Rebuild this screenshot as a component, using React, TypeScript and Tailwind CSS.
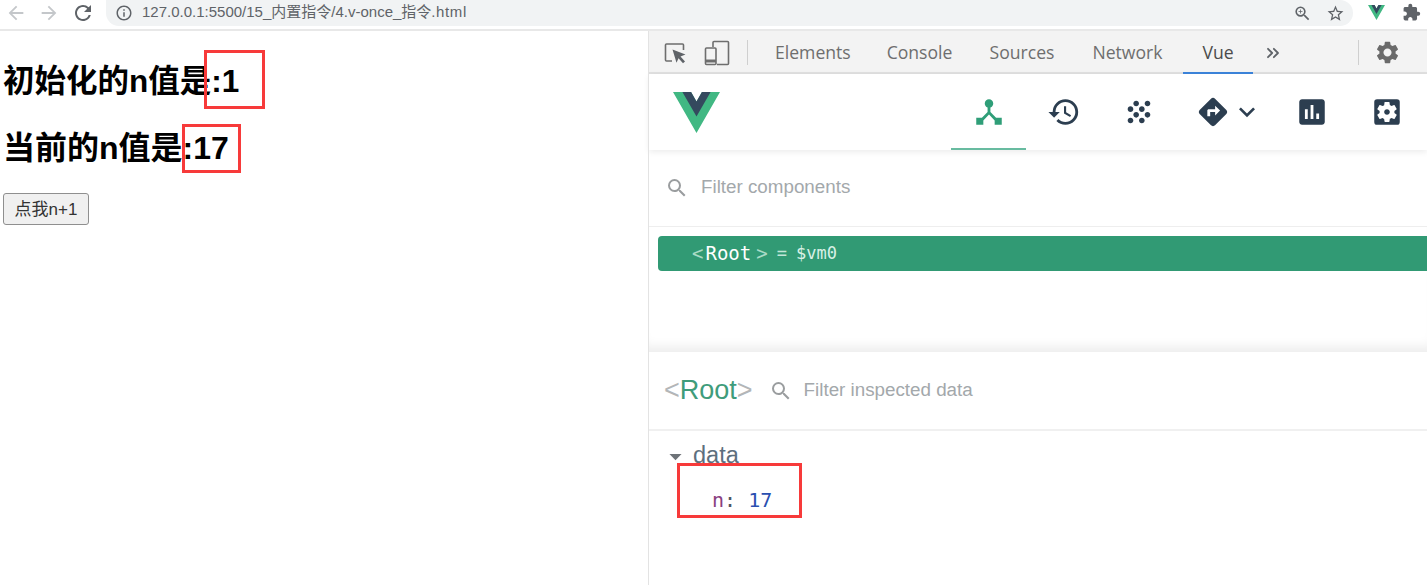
import {
  MdArrowBack,
  MdArrowForward,
  MdRefresh,
  MdInfoOutline,
  MdZoomIn,
  MdStarBorder,
  MdExtension,
  MdDeviceHub,
  MdHistory,
  MdGrain,
  MdDirections,
  MdKeyboardArrowDown,
  MdAssessment,
  MdSettingsApplications,
  MdSettings,
  MdSearch,
  MdArrowDropDown,
} from "react-icons/md";
import { ChevronsRight } from "lucide-react";

const tabs = [
  { label: "Elements", cls: "w-[75px] ml-[27px]" },
  { label: "Console", cls: "w-[67px] ml-[36px]" },
  { label: "Sources", cls: "w-[66px] ml-[36px]" },
  { label: "Network", cls: "w-[71px] ml-[37px]" },
];

const VueLogo = ({ className }: { className: string }) => (
  <svg viewBox="0 0 261.76 226.69" className={className} preserveAspectRatio="none">
    <path d="M161.096.001l-30.225 52.351L100.647.001H-.005l130.877 226.688L261.749.001z" fill="#41b883" />
    <path d="M161.096.001l-30.225 52.351L100.647.001H52.346l78.526 136.01L209.398.001z" fill="#34495e" />
  </svg>
);

const InspectIcon = () => (
  <svg viewBox="0 0 24 24" className="w-[24px] h-[24px]" fill="none">
    <path d="M9 20H3.5a1 1 0 0 1-1-1V4a1 1 0 0 1 1-1h16a1 1 0 0 1 1 1v5" stroke="#6e6e6e" strokeWidth="1.6" />
    <path d="M9.5 8.5l13 5-5 2 4.5 5-2 1.8-4.5-5-2 4.5z" fill="#5f6368" />
  </svg>
);

const DeviceIcon = () => (
  <svg viewBox="0 0 26 26" className="w-[26px] h-[26px]" fill="none" stroke="#6e6e6e" strokeWidth="1.6">
    <path d="M9 7V2.5a1 1 0 0 1 1-1h13.5a1 1 0 0 1 1 1v21a1 1 0 0 1-1 1H13" />
    <rect x="1.5" y="8" width="10.5" height="16.5" rx="1" />
    <path d="M1.5 21h10.5" strokeWidth="3" />
  </svg>
);

const Headline = ({ text, value, className }: { text: string; value: string; className: string }) => (
  <h1 className={`leading-[43px] font-bold text-black whitespace-nowrap ${className}`}>
    {text}:{value}
  </h1>
);

const RedBox = ({ className }: { className: string }) => (
  <div className={`absolute border-[3px] border-[#f73a3a] ${className}`} />
);

export default function App() {
  return (
    <div className="relative w-[1427px] h-[585px] overflow-hidden bg-white flex flex-col font-['Open_Sans','Noto_Sans_CJK_SC',sans-serif]">
      {/* browser toolbar */}
      <div className="h-[31px] shrink-0 flex items-start border-b-2 border-[#e8e8e8] text-[#5f6368]">
        <div className="flex items-center h-[26px] pl-[5px]">
          <MdArrowBack className="w-[22px] h-[22px] text-[#c4c7ca]" />
          <MdArrowForward className="w-[22px] h-[22px] text-[#c4c7ca] ml-[11px]" />
          <MdRefresh className="w-[24px] h-[24px] text-[#5f6368] ml-[11px]" />
        </div>
        <div className="ml-[11px] w-[1247px] h-[26px] rounded-r-[13px] rounded-bl-[13px] bg-[#f1f3f4] flex items-center pl-[9px] pr-[8px]">
          <MdInfoOutline className="w-[18px] h-[18px] text-[#5f6368]" />
          <span className="ml-[9px] -mt-[2px] text-[15px] leading-[20px] text-[#5f6368] whitespace-nowrap font-['Liberation_Sans','Noto_Sans_CJK_SC',sans-serif]">
            127.0.0.1:5500/15_内置指令/4.v-once_指令<span className="tracking-[0.6px]">.html</span>
          </span>
          <MdZoomIn className="ml-auto w-[19px] h-[19px] text-[#5f6368]" />
          <MdStarBorder className="ml-[14px] w-[19px] h-[19px] text-[#5f6368]" />
        </div>
        <div className="flex items-center h-[24px]">
          <VueLogo className="ml-[15px] w-[17px] h-[15px]" />
          <MdExtension className="ml-[17px] w-[19px] h-[19px] text-[#5f6368]" />
        </div>
      </div>

      <div className="flex-1 flex min-h-0">
        {/* page */}
        <div className="relative w-[649px] shrink-0 border-r border-[#e3e3e3] pl-[3px] pt-[29px] font-['Liberation_Sans','Noto_Sans_CJK_SC',sans-serif]">
          <Headline text="初始化的n值是" value="1" className="text-[31.5px]" />
          <Headline text="当前的n值是" value="17" className="text-[32px] mt-[24px]" />
          <button className="mt-[23px] w-[86px] h-[32px] pt-[1px] bg-[#f0f0f0] border border-[#8f8f8f] rounded-[3px] text-[17px] text-[#333333] whitespace-nowrap">
            点我n+1
          </button>
        </div>

        {/* devtools */}
        <div className="flex-1 min-w-0 flex flex-col">
          <div className="h-[43px] shrink-0 pt-[2px] bg-[#f3f3f3] border-b-2 border-[#e0e0e0] flex items-center text-[17.6px] text-[#6e6e6e]">
            <div className="ml-[14px] flex items-center">
              <InspectIcon />
              <div className="ml-[17px]">
                <DeviceIcon />
              </div>
              <div className="ml-[17px] w-px h-[25px] bg-[#cfcfcf]" />
            </div>
            {tabs.map((tab) => (
              <span key={tab.label} className={`${tab.cls} whitespace-nowrap text-center`}>
                {tab.label}
              </span>
            ))}
            <div className="relative ml-[20px] w-[70px] h-full flex items-center justify-center text-[#4b4b4b]">
              Vue
              <div className="absolute left-0 right-0 bottom-[-2px] h-[2px] bg-[#3b82d8]" />
            </div>
            <ChevronsRight className="ml-[10px] w-[20px] h-[20px] text-[#5f6368]" strokeWidth={2.2} />
            <div className="ml-[75px] w-px h-[25px] bg-[#cfcfcf]" />
            <MdSettings className="ml-[15px] w-[27px] h-[27px] text-[#6a6a6a]" />
          </div>

          {/* vue header */}
          <div className="h-[76px] shrink-0 flex items-center bg-white shadow-[0_2px_6px_rgba(0,0,0,0.08)] text-[#2c3e50]">
            <VueLogo className="ml-[24px] w-[47px] h-[41px]" />
            <div className="relative ml-[231px] w-[75px] h-full flex items-center justify-center text-[#2f9e78]">
              <MdDeviceHub className="w-[34px] h-[34px] -mt-[1px]" />
              <div className="absolute left-0 right-0 bottom-0 h-[2px] bg-[#68bba0]" />
            </div>
            <div className="w-[75px] flex justify-center">
              <MdHistory className="w-[34px] h-[34px]" />
            </div>
            <div className="w-[75px] flex justify-center">
              <MdGrain className="w-[34px] h-[34px]" />
            </div>
            <div className="flex items-center pl-[20px]">
              <MdDirections className="w-[34px] h-[34px] shrink-0" />
              <MdKeyboardArrowDown className="w-[32px] h-[32px] shrink-0 ml-[1px]" />
            </div>
            <MdAssessment className="ml-[32px] w-[34px] h-[34px]" />
            <MdSettingsApplications className="ml-[41px] w-[34px] h-[34px]" />
          </div>

          {/* components */}
          <div className="h-[77px] shrink-0 flex items-center border-b border-[#eeeeee] pl-[16px] text-[18.8px] text-[#a3a8ab] font-['Liberation_Sans',sans-serif]">
            <MdSearch className="w-[24px] h-[24px] text-[#9a9d9f]" />
            <span className="ml-[12px] -mt-[2px]">Filter components</span>
          </div>
          <div className="h-[124px] shrink-0 pt-[9px] pl-[9px] bg-white shadow-[inset_0_-12px_12px_-8px_rgba(0,0,0,0.08)]">
            <div className="h-[35px] rounded-l-[4px] bg-[#319a74] flex items-center pl-[34px] text-[#d8f0e6] font-['DejaVu_Sans_Mono',monospace] whitespace-pre">
              <span className="text-[19px] text-[#a9dac6]">&lt;</span>
              <span className="ml-[2px] text-[19px] text-white">Root</span>
              <span className="ml-[5px] text-[19px] text-[#a9dac6]">&gt;</span>
              <span className="ml-[9px] text-[17px] text-[#c3e6d8]">=</span>
              <span className="ml-[9px] text-[17px]">$vm0</span>
            </div>
          </div>

          {/* inspector */}
          <div className="h-[80px] shrink-0 flex items-center border-t border-b-2 border-[#f0f0f0] pl-[15px] font-['Liberation_Sans',sans-serif]">
            <span className="text-[27px] text-[#b3b6b8]">&lt;</span>
            <span className="text-[27px] text-[#3f9c7b]">Root</span>
            <span className="text-[27px] text-[#b3b6b8]">&gt;</span>
            <MdSearch className="ml-[16px] w-[24px] h-[24px] text-[#9a9d9f]" />
            <span className="ml-[11px] text-[18.8px] text-[#a3a8ab]">Filter inspected data</span>
          </div>
          <div className="flex-1 pl-[15px] pt-[11px]">
            <div className="flex items-center h-[28px] font-['Liberation_Sans',sans-serif] text-[23.5px] text-[#5d6f7e]">
              <MdArrowDropDown className="w-[29px] h-[29px] text-[#6e7378] -ml-[3px]" />
              <span className="ml-[3px]">data</span>
            </div>
            <div className="pl-[48px] mt-[18px] font-['DejaVu_Sans_Mono',monospace] text-[20px] leading-[24px] whitespace-pre">
              <span className="text-[#8a3f7f]">n</span>
              <span className="text-[#4b5563]">: </span>
              <span className="text-[#2a4fb0]">17</span>
            </div>
          </div>
        </div>
      </div>

      {/* red annotation boxes */}
      <RedBox className="left-[204px] top-[50px] w-[61px] h-[59px]" />
      <RedBox className="left-[182px] top-[124px] w-[59px] h-[49px]" />
      <RedBox className="left-[677px] top-[463px] w-[125px] h-[55px]" />
    </div>
  );
}
